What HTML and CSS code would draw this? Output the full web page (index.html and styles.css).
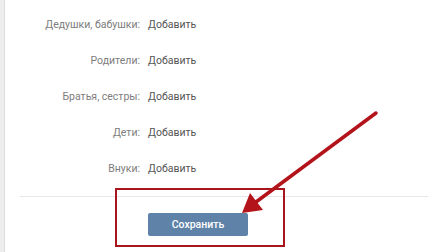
FILE: index.html
```html
<!DOCTYPE html>
<html lang="ru">
<head>
  <meta charset="UTF-8" />
  <title>Родственники</title>
  <link rel="stylesheet" href="styles.css">
</head>
<body>

  <div class="page">
    <!-- Relatives form -->
    <div class="form">
      <div class="row"><div class="label">Дедушки, бабушки:</div><a class="add">Добавить</a></div>
      <div class="row"><div class="label">Родители:</div><a class="add">Добавить</a></div>
      <div class="row"><div class="label">Братья, сестры:</div><a class="add">Добавить</a></div>
      <div class="row"><div class="label">Дети:</div><a class="add">Добавить</a></div>
      <div class="row"><div class="label">Внуки:</div><a class="add">Добавить</a></div>
    </div>

    <div class="footer">
      <button class="save-btn">Сохранить</button>
    </div>

    <!-- Annotation -->
    <div class="highlight"></div>
    <svg class="arrow" width="434" height="252" viewBox="0 0 434 252">
      <line x1="376" y1="113" x2="256" y2="202" stroke="#b3141b" stroke-width="3.5" stroke-linecap="round"/>
      <polygon points="242,213 263,210 250,193" fill="#b3141b"/>
    </svg>
  </div>

</body>
</html>
```

FILE: styles.css
```css
body {
  margin: 0;
  font-family: Roboto, "Liberation Sans", Arial, sans-serif;
  background: #fff;
}

.page {
  position: relative;
  height: 252px;
  border-left: 4px solid #ededed;
  box-shadow: inset 1px 0 0 #dedede;
  overflow: hidden;
}

/* Form rows */
.form {
  padding-top: 6px;
}

.row {
  display: grid;
  grid-template-columns: 136px auto;
  column-gap: 8px;
  align-items: center;
  height: 36px;
  font-size: 10.5px;
}

.label {
  text-align: right;
  color: #7d7d7d;
}

.add {
  color: #555;
  cursor: pointer;
}

/* Footer */
.footer {
  margin: 10px 6px 0 16px;
  border-top: 1px solid #e7e8ec;
  padding-top: 16px;
  padding-left: 128px;
}

.save-btn {
  width: 100px;
  height: 23px;
  border: none;
  border-radius: 2px;
  background-color: #5e82a8;
  color: #fff;
  font-family: inherit;
  font-size: 10.5px;
  font-weight: 500;
  cursor: pointer;
}

/* Annotation overlay */
.highlight {
  position: absolute;
  left: 111px;
  top: 188px;
  width: 166px;
  height: 55px;
  border: 2px solid #a8161d;
}

.arrow {
  position: absolute;
  left: -4px;
  top: 0;
}
```
